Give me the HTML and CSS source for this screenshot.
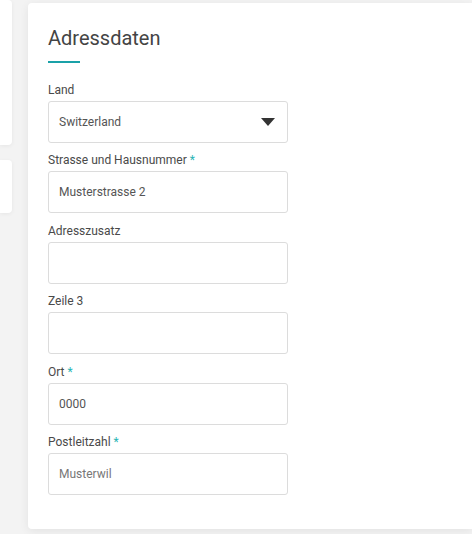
FILE: index.html
```html
<!DOCTYPE html>
<html lang="de">
<head>
<meta charset="utf-8">
<link rel="stylesheet" href="styles.css">
</head>
<body>
<div class="page">
  <div class="side">
    <div class="side-card first"></div>
    <div class="side-card second"></div>
  </div>
  <div class="card">
    <h2 class="title">Adressdaten</h2>
    <div class="title-line"></div>
    <div class="fields">
      <div class="field">
        <label class="label">Land</label>
        <div class="input select">
          <span>Switzerland</span>
          <svg class="caret" width="14" height="8" viewBox="0 0 14 8"><path d="M0 0h14L7 8z" fill="#333"/></svg>
        </div>
      </div>
      <div class="field">
        <label class="label">Strasse und Hausnummer <span class="req">*</span></label>
        <div class="input"><span>Musterstrasse 2</span></div>
      </div>
      <div class="field">
        <label class="label">Adresszusatz</label>
        <div class="input"></div>
      </div>
      <div class="field">
        <label class="label">Zeile 3</label>
        <div class="input"></div>
      </div>
      <div class="field">
        <label class="label">Ort <span class="req">*</span></label>
        <div class="input"><span>0000</span></div>
      </div>
      <div class="field">
        <label class="label">Postleitzahl <span class="req">*</span></label>
        <div class="input"><span class="muted">Musterwil</span></div>
      </div>
    </div>
  </div>
</div>
</body>
</html>
```
FILE: styles.css
```css
html, body {
  margin: 0;
  padding: 0;
  background: #f3f3f3;
  font-family: Roboto, "Liberation Sans", sans-serif;
  color: #333;
  overflow: hidden;
}
.page {
  display: flex;
  gap: 16px;
  height: 534px;
}
.side {
  width: 12px;
  display: flex;
  flex-direction: column;
  gap: 15px;
}
.side-card {
  background: #fff;
  border-radius: 0 4px 4px 0;
  box-shadow: 0 1px 4px rgba(0,0,0,0.06);
}
.side-card.first { height: 145px; }
.side-card.second { height: 53px; }
.card {
  flex: 1;
  margin-top: 3px;
  height: 526px;
  box-sizing: border-box;
  background: #fff;
  border-radius: 4px 0 0 4px;
  box-shadow: 0 2px 10px rgba(0,0,0,0.07);
  padding: 23px 20px 0 20px;
}
.title {
  margin: 0;
  font-size: 20px;
  font-weight: 400;
  line-height: 24px;
  color: #444;
}
.title-line {
  width: 32px;
  height: 2px;
  background: #1aa1a8;
  margin-top: 11px;
}
.fields {
  margin-top: 20px;
  display: flex;
  flex-direction: column;
  gap: 10.4px;
}
.field {
  display: flex;
  flex-direction: column;
  gap: 4px;
}
.label {
  font-size: 12px;
  line-height: 14px;
  color: #4a4a4a;
}
.req { color: #2bb5b5; }
.input {
  width: 240px;
  height: 42px;
  box-sizing: border-box;
  border: 1px solid #dcdcdc;
  border-radius: 3px;
  display: flex;
  align-items: center;
  padding: 0 10px;
  font-size: 12px;
  color: #555;
}
.select { justify-content: space-between; padding-right: 12px; }
.muted { color: #777; }
```
